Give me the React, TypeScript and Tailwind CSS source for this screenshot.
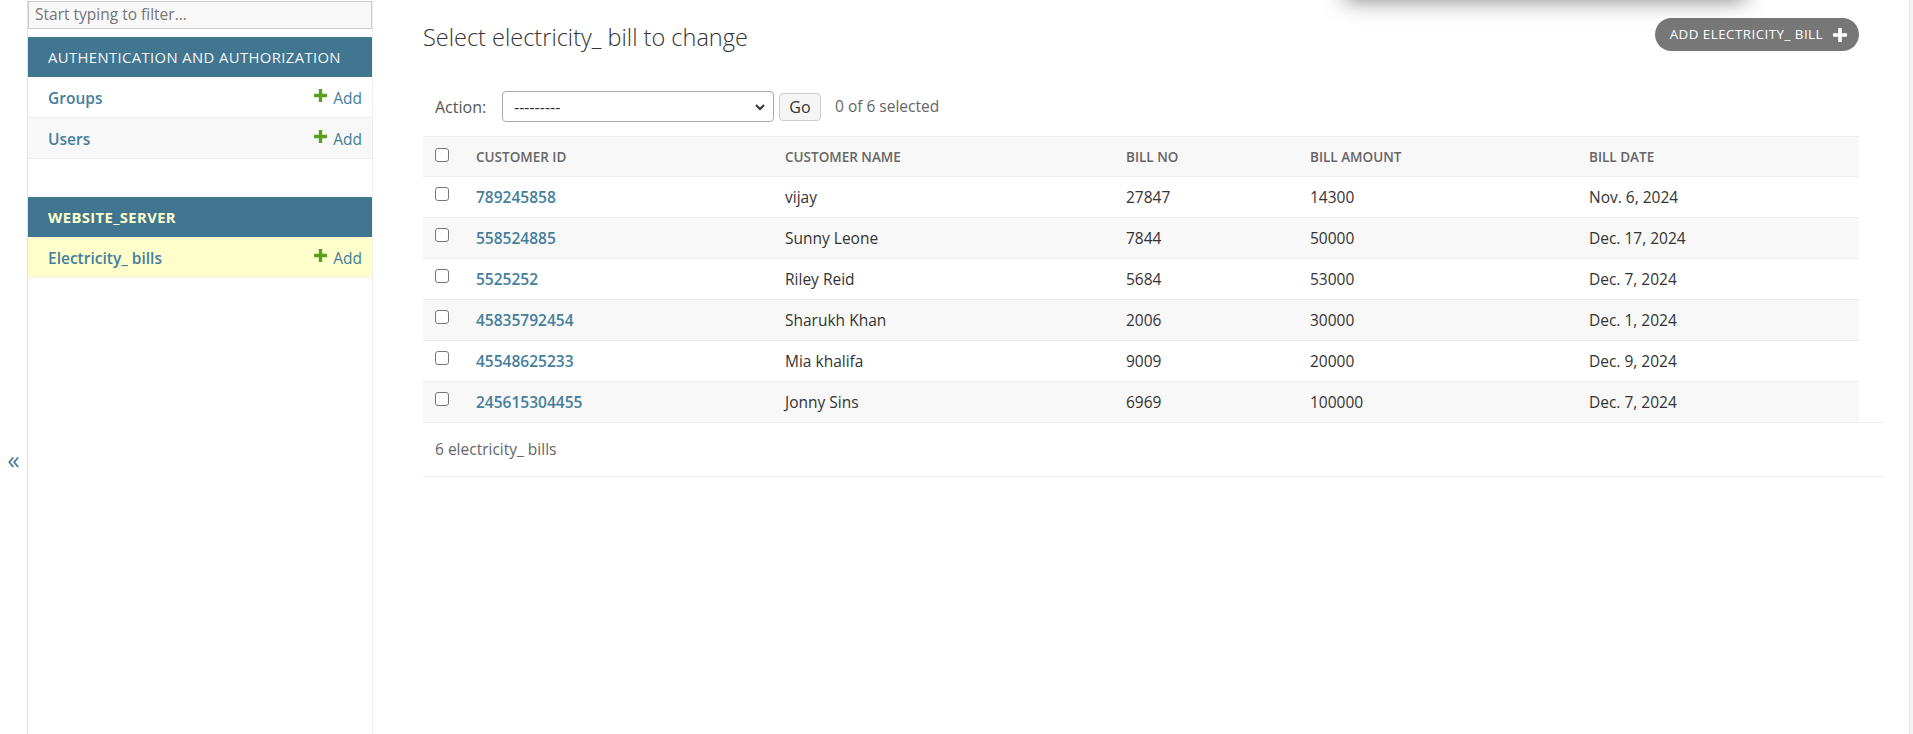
import React from "react";

// ── Icons ──────────────────────────────────────────────────────────────────────
const IconPlus = ({ className }: { className?: string }) => (
  <svg className={className} viewBox="0 0 14 14" fill="currentColor">
    <path d="M5.2 0h3.6v5.2H14v3.6H8.8V14H5.2V8.8H0V5.2h5.2z" />
  </svg>
);

const Checkbox = () => (
  <span className="block h-[14px] w-[14px] rounded-[3px] border border-[#767676] bg-white" />
);

// ── Data ──────────────────────────────────────────────────────────────────────
const bills = [
  { id: "789245858", name: "vijay", no: "27847", amount: "14300", date: "Nov. 6, 2024" },
  { id: "558524885", name: "Sunny Leone", no: "7844", amount: "50000", date: "Dec. 17, 2024" },
  { id: "5525252", name: "Riley Reid", no: "5684", amount: "53000", date: "Dec. 7, 2024" },
  { id: "45835792454", name: "Sharukh Khan", no: "2006", amount: "30000", date: "Dec. 1, 2024" },
  { id: "45548625233", name: "Mia khalifa", no: "9009", amount: "20000", date: "Dec. 9, 2024" },
  { id: "245615304455", name: "Jonny Sins", no: "6969", amount: "100000", date: "Dec. 7, 2024" },
];

const cols = "grid grid-cols-[43px_309px_341px_184px_279px_1fr]";

// ── Sidebar ───────────────────────────────────────────────────────────────────
function ModelRow({ label, shaded, current }: { label: string; shaded?: boolean; current?: boolean }) {
  return (
    <div
      className={
        "flex h-[41px] items-center justify-between border-b border-[#eee] pl-[20px] pr-[10px] pt-[3px] " +
        (current ? "bg-[#ffffcc]" : shaded ? "bg-[#f8f8f8]" : "bg-white")
      }
    >
      <span className="text-[15.5px] font-semibold text-[#447e9b]">{label}</span>
      <span className="flex items-center gap-[6px] text-[15.5px] text-[#447e9b]">
        <IconPlus className="mb-[7px] h-[13px] w-[13px] text-[#5c9f1f]" />
        Add
      </span>
    </div>
  );
}

function Sidebar() {
  return (
    <aside className="w-[345px] shrink-0 border-r border-[#eee]">
      <div className="pt-[1px]">
        <div className="flex h-[28px] items-center border border-[#ccc] bg-[#f8f8f8] px-[6px] text-[15.5px] text-[#757575]">
          Start typing to filter...
        </div>
      </div>

      <div className="mt-[8px]">
        <div className="flex h-[40px] items-center bg-[#417690] pl-[20px] pt-[1px] text-[14.8px] tracking-[0.4px] text-[#f5f5f5]">
          AUTHENTICATION AND AUTHORIZATION
        </div>
        <ModelRow label="Groups" />
        <ModelRow label="Users" shaded />
      </div>

      <div className="mt-[38px]">
        <div className="flex h-[40px] items-center bg-[#417690] pl-[20px] text-[14.8px] font-bold tracking-[0.4px] text-[#ffffcc]">
          WEBSITE_SERVER
        </div>
        <ModelRow label="Electricity_ bills" current />
      </div>
    </aside>
  );
}

// ── Page ──────────────────────────────────────────────────────────────────────
export default function App() {
  return (
    <div
      className="relative flex min-h-[734px] w-full overflow-hidden bg-white text-[#333]"
      style={{ fontFamily: '"Open Sans", "Noto Sans", Arial, sans-serif' }}
    >
      {/* shadow of a menu above the viewport */}
      <div className="absolute left-[1345px] top-[-60px] h-[58px] w-[400px] bg-white shadow-[0_2px_22px_rgba(0,0,0,0.5)]" />

      {/* Collapse toggle */}
      <div className="w-[28px] shrink-0 border-r border-[#e2e2e2] pt-[444px] text-center text-[25px] leading-[30px] text-[#447e9b]">
        «
      </div>

      <Sidebar />

      {/* Content */}
      <main className="flex-1 pl-[50px] pr-[50px]">
        <div className="flex h-[51px] items-start justify-between pt-[18px]">
          <h1 className="pt-[4px] text-[23.5px] font-light leading-[31px] text-[#333]">
            Select electricity_ bill to change
          </h1>
          <button className="flex h-[33px] items-center gap-[10px] rounded-full bg-[#777] pl-[15px] pr-[12px] text-[13.3px] tracking-[0.5px] text-white">
            ADD ELECTRICITY_ BILL
            <IconPlus className="h-[14px] w-[14px]" />
          </button>
        </div>

        {/* Actions */}
        <div className="mt-[40px] flex h-[31px] items-center pl-[12px]">
          <span className="w-[67px] text-[16px] text-[#555]">Action:</span>
          <div className="flex h-[31px] w-[272px] items-center justify-between rounded-[4px] border border-[#aaa] bg-white pl-[11px] pr-[7px] text-[16px] text-[#333]">
            <span>---------</span>
            <svg className="h-[12px] w-[12px]" viewBox="0 0 12 12" fill="none" stroke="#333" strokeWidth={2}>
              <path d="M2 4l4 4 4-4" />
            </svg>
          </div>
          <button className="ml-[5px] flex h-[28px] w-[42px] items-center justify-center rounded-[4px] border border-[#ccc] bg-[#f5f5f5] text-[16px] text-[#333]">
            Go
          </button>
          <span className="ml-[14px] text-[15.5px] text-[#666]">0 of 6 selected</span>
        </div>

        {/* Results */}
        <div className="mr-[-25px] mt-[14px] border-b border-[#eee]">
          <div className="mr-[25px]">
            <div className={cols + " h-[41px] items-center border-y border-[#eee] bg-[#f8f8f8] pt-[1px] text-[13.5px] font-semibold text-[#666]"}>
              <div className="mb-[5px] pl-[12px]">
                <Checkbox />
              </div>
              <div className="pl-[10px]">CUSTOMER ID</div>
              <div className="pl-[10px]">CUSTOMER NAME</div>
              <div className="pl-[10px]">BILL NO</div>
              <div className="pl-[10px]">BILL AMOUNT</div>
              <div className="pl-[10px]">BILL DATE</div>
            </div>
            {bills.map((b, i) => (
              <div
                key={b.id}
                className={
                  cols +
                  " h-[41px] items-center border-b border-[#eee] pt-[2px] text-[15.5px] " +
                  (i % 2 === 1 ? "bg-[#f8f8f8]" : "bg-white")
                }
              >
                <div className="mb-[8px] pl-[12px]">
                  <Checkbox />
                </div>
                <div className="pl-[10px] font-semibold text-[#447e9b]">{b.id}</div>
                <div className="pl-[10px]">{b.name}</div>
                <div className="pl-[10px]">{b.no}</div>
                <div className="pl-[10px]">{b.amount}</div>
                <div className="pl-[10px]">{b.date}</div>
              </div>
            ))}
          </div>
          <div className="mt-[-1px] border-t border-[#eee]" />
          <div className="flex h-[53px] items-center pl-[12px] text-[15.5px] text-[#666]">6 electricity_ bills</div>
        </div>
      </main>

      {/* right edge gutter */}
      <div className="w-[4px] shrink-0 border-l border-[#e5e5e5] bg-[#f3f3f3]" />
    </div>
  );
}
